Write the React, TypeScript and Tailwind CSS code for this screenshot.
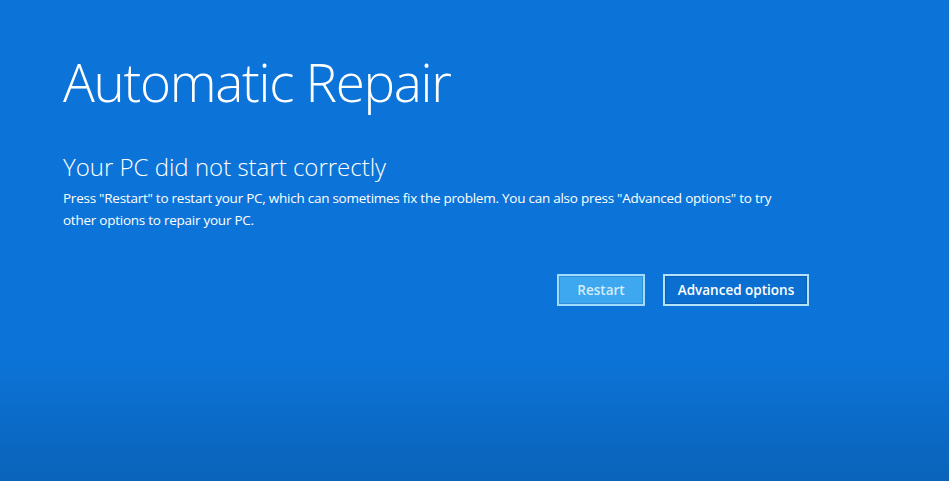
import React from "react";

export default function App() {
  return (
    <div
      className="w-[949px] h-[481px] overflow-hidden bg-[linear-gradient(to_bottom,#0c74d8_0%,#0c74d8_74%,#0a63b9_100%)] text-white"
      style={{ fontFamily: '"Open Sans", "Noto Sans", sans-serif' }}
    >
      <div className="pl-[63px] pt-[47px] flex flex-col">
        <h1 className="text-[53px] leading-[70px] font-light tracking-[-1.3px]">Automatic Repair</h1>
        <h2 className="mt-[35px] text-[24px] leading-[30px] font-light">Your PC did not start correctly</h2>
        <p className="mt-[5px] w-[742px] text-[13.5px] leading-[22px] font-normal tracking-[-0.25px]">
          Press "Restart" to restart your PC, which can sometimes fix the problem. You can also press "Advanced options" to try other options to repair your PC.
        </p>
        <div className="mt-[43px] w-[746px] flex justify-end gap-[18px]">
          <button className="w-[88px] h-[32px] border-2 border-[#9fdcff] bg-[#3da7f0] text-[13.5px] font-semibold text-[#d4ecfb] shadow-[inset_0_0_0_1px_#2f8fd8]">
            Restart
          </button>
          <button className="w-[146px] h-[32px] border-2 border-[#b4e2fb] bg-[#0b6fd1] text-[13.5px] font-semibold text-white shadow-[inset_0_0_0_1px_#0a5fb5]">
            Advanced options
          </button>
        </div>
      </div>
    </div>
  );
}
